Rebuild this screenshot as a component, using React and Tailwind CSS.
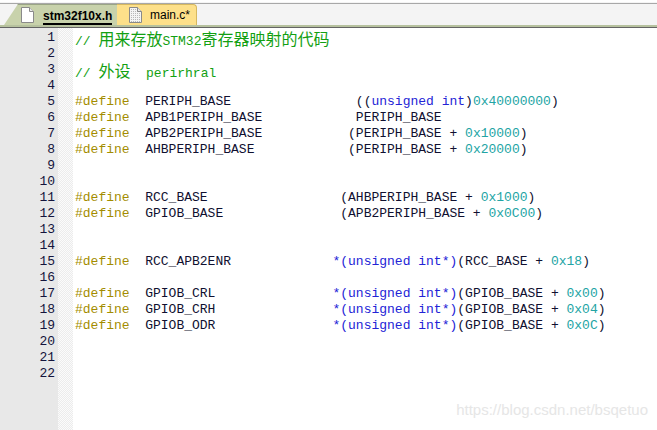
import React from 'react';

const cm = 'text-[#12a012]';
const pp = 'text-[#a38c00]';
const id = 'text-[#101030]';
const kw = 'text-[#2323d6]';
const num = 'text-[#22a4a4]';
const cjk = 'text-[16px] font-["Noto_Sans_CJK_SC",sans-serif]';

const lines = [
  [[cm, '// '], [cm + ' ' + cjk, '用来存放'], [cm, 'STM32'], [cm + ' ' + cjk, '寄存器映射的代码']],
  [],
  [[cm, '// '], [cm + ' ' + cjk, '外设'], [cm, '  perirhral']],
  [],
  [[pp, '#define'], [id, '  PERIPH_BASE                ('], [id, '('], [kw, 'unsigned int'], [id, ')'], [num, '0x40000000'], [id, ')']],
  [[pp, '#define'], [id, '  APB1PERIPH_BASE            PERIPH_BASE']],
  [[pp, '#define'], [id, '  APB2PERIPH_BASE           (PERIPH_BASE + '], [num, '0x10000'], [id, ')']],
  [[pp, '#define'], [id, '  AHBPERIPH_BASE            (PERIPH_BASE + '], [num, '0x20000'], [id, ')']],
  [],
  [],
  [[pp, '#define'], [id, '  RCC_BASE                 (AHBPERIPH_BASE + '], [num, '0x1000'], [id, ')']],
  [[pp, '#define'], [id, '  GPIOB_BASE               (APB2PERIPH_BASE + '], [num, '0x0C00'], [id, ')']],
  [],
  [],
  [[pp, '#define'], [id, '  RCC_APB2ENR             '], [kw, '*(unsigned int*)'], [id, '(RCC_BASE + '], [num, '0x18'], [id, ')']],
  [],
  [[pp, '#define'], [id, '  GPIOB_CRL               '], [kw, '*(unsigned int*)'], [id, '(GPIOB_BASE + '], [num, '0x00'], [id, ')']],
  [[pp, '#define'], [id, '  GPIOB_CRH               '], [kw, '*(unsigned int*)'], [id, '(GPIOB_BASE + '], [num, '0x04'], [id, ')']],
  [[pp, '#define'], [id, '  GPIOB_ODR               '], [kw, '*(unsigned int*)'], [id, '(GPIOB_BASE + '], [num, '0x0C'], [id, ')']],
  [],
  [],
  [],
];

function PageIcon({ hatched }) {
  return (
    <svg width="13" height="16" viewBox="0 0 13 16" className="shrink-0">
      <defs>
        <pattern id="hatch" width="2" height="2" patternUnits="userSpaceOnUse">
          <rect width="2" height="2" fill="#f4f4f4" />
          <rect width="1" height="1" fill="#b8b8b8" />
        </pattern>
      </defs>
      <path d="M0.5 0.5 H8.5 L12.5 4.5 V15.5 H0.5 Z" fill={hatched ? 'url(#hatch)' : '#ffffff'} stroke="#8a8a8a" />
      <path d="M8.5 0.5 V4.5 H12.5" fill="#e8e8e8" stroke="#8a8a8a" />
    </svg>
  );
}

export default function App() {
  return (
    <div className="relative w-[657px] h-[430px] overflow-hidden bg-white">
      {/* tab strip */}
      <div className="h-[25px] bg-[#f4f4f4] border-t-[2px] border-t-[#ffffff] relative">
        <div className="absolute top-[1px] left-0 right-0 h-px bg-[#a8a8a8]" />
        <div className="flex items-end h-full pl-[4px] font-['Liberation_Sans',Arial,sans-serif] text-[12px]">
          <div className="flex items-center gap-[9px] h-[21px] w-[113px] pl-[17px] bg-[#c8d2ab] border-t border-[#9aa585] [clip-path:polygon(0_100%,14px_0,100%_0,100%_100%)]">
            <PageIcon />
            <span className="font-bold text-black border-b-2 border-black leading-[14px] mt-[3px]">stm32f10x.h</span>
          </div>
          <div className="flex items-center gap-[8px] h-[21px] w-[80px] pl-[12px] bg-[#fde08a] border-t border-r border-[#d6b860] rounded-tr-[4px]">
            <PageIcon hatched />
            <span className="text-black">main.c*</span>
          </div>
        </div>
      </div>
      <div className="h-[2px] bg-[#b6c19e]" />
      <div className="h-px bg-[#646464]" />

      {/* editor */}
      <div className="flex h-[402px]">
        <div className="w-[58px] bg-[#e8e8e8] pt-[2px] pr-[3px] text-right font-['Liberation_Mono','Courier_New',monospace] text-[13px] leading-[16px] text-[#14143c]">
          {lines.map((_, i) => (
            <div key={i} className="h-[16px]">{i + 1}</div>
          ))}
        </div>
        <div className="w-[15px] bg-[repeating-conic-gradient(#ececec_0_25%,#fbfbfb_0_50%)] bg-[length:2px_2px]" />
        <div className="flex-1 pl-[2px] pt-[2px] font-['Liberation_Mono','Courier_New',monospace] text-[13px] leading-[16px] whitespace-pre">
          {lines.map((segs, i) => (
            <div key={i} className="h-[16px]">
              {segs.map(([cls, txt], j) => (
                <span key={j} className={cls + ' leading-[16px]'}>{txt}</span>
              ))}
            </div>
          ))}
        </div>
      </div>

      <div className="absolute right-[9px] bottom-[9px] font-['Liberation_Sans',Arial,sans-serif] text-[15px] text-[#e6e6e6]">
        https://blog.csdn.net/bsqetuo
      </div>
    </div>
  );
}
